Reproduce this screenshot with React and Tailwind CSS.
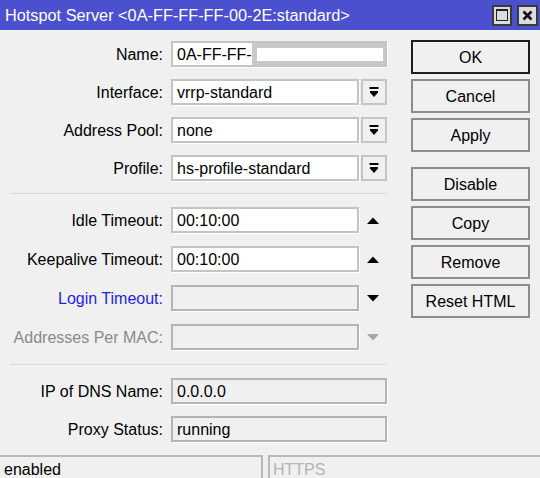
import React from "react";

function DropIcon() {
  return (
    <svg width="10" height="11" viewBox="0 0 10 11">
      <rect x="0.5" y="0" width="9" height="2" fill="#000" />
      <polygon points="1,4 9,4 9,5.5 5,10 1,5.5" fill="#000" />
    </svg>
  );
}

function Tri({ up, color = "#000" }) {
  return (
    <svg width="12" height="7" viewBox="0 0 12 7">
      {up ? (
        <polygon points="0,7 12,7 6,0.5" fill={color} />
      ) : (
        <polygon points="0,0 12,0 6,6.5" fill={color} />
      )}
    </svg>
  );
}

function Row({ label, labelClass = "text-black", children }) {
  return (
    <div className="flex items-center h-[26px]">
      <div className={`w-[163px] pt-[2px] text-right whitespace-nowrap ${labelClass}`}>{label}</div>
      <div className="ml-[8px] flex items-center h-full">{children}</div>
    </div>
  );
}

function Field({ value, wide, disabled, children }) {
  return (
    <div
      className={`h-[26px] ${wide ? "w-[216px]" : "w-[188px]"} flex items-center pl-[4px] border-2 ${
        disabled ? "bg-[#f0f0f0] border-[#b4b4b4]" : "bg-white border-[#c4c4c4]"
      } shadow-[1px_1px_0_#ffffff] overflow-hidden whitespace-nowrap`}
    >
      <span className="pt-[2px]">{value}</span>
      {children}
    </div>
  );
}

function DropBtn() {
  return (
    <div className="ml-[2px] w-[26px] h-[26px] border-2 border-[#c4c4c4] bg-[#f0f0f0] flex items-center justify-center">
      <DropIcon />
    </div>
  );
}

function Arrow({ up, color }) {
  return (
    <div className="w-[28px] flex items-center justify-center">
      <Tri up={up} color={color} />
    </div>
  );
}

function Btn({ children, primary, className = "" }) {
  return (
    <button
      className={`w-[119px] h-[34px] pt-[2px] bg-[#f0f0f0] border-2 ${
        primary ? "border-[#1e1e1e]" : "border-[#8c8c8c]"
      } text-black ${className}`}
    >
      {children}
    </button>
  );
}

export default function App() {
  return (
    <div className="w-[540px] h-[478px] bg-[#f0f0f0] flex flex-col overflow-hidden font-['Liberation_Sans',Arial,sans-serif] text-[16px] leading-none text-black">
      {/* Title bar */}
      <div className="h-[30px] bg-[#4b50cf] flex items-center pl-[5px] pr-[2px] text-white text-[16.3px] shrink-0">
        <div className="flex-1 pt-[1px] whitespace-nowrap">Hotspot Server &lt;0A-FF-FF-FF-00-2E:standard&gt;</div>
        <div className="flex gap-[5px]">
          <div className="w-[20px] h-[21px] bg-[#dcdcdc] border-2 border-[#3a3a3a] flex items-center justify-center">
            <div className="w-[12px] h-[12px] border border-[#222] border-t-2"></div>
          </div>
          <div className="w-[21px] h-[21px] bg-[#dcdcdc] border-2 border-[#3a3a3a] flex items-center justify-center">
            <svg width="11" height="11" viewBox="0 0 11 11">
              <path d="M1.5 1.5 L9.5 9.5 M9.5 1.5 L1.5 9.5" stroke="#111" strokeWidth="2.6" />
            </svg>
          </div>
        </div>
      </div>

      <div className="flex flex-1">
        {/* Left: fields */}
        <div className="w-[400px] flex flex-col pt-[11px]">
          <div className="flex flex-col gap-[12px]">
            <Row label="Name:">
              <Field value="0A-FF-FF-" wide>
                <div className="w-[137px] h-[23px] bg-[#c8c8c8] flex items-center pl-[5px]">
                  <div className="w-[126px] h-[13px] bg-white"></div>
                </div>
              </Field>
            </Row>
            <Row label="Interface:">
              <Field value="vrrp-standard" />
              <DropBtn />
            </Row>
            <Row label="Address Pool:">
              <Field value="none" />
              <DropBtn />
            </Row>
            <Row label="Profile:">
              <Field value="hs-profile-standard" />
              <DropBtn />
            </Row>
          </div>

          <div className="mt-[12px] ml-[10px] w-[377px] h-[1px] bg-[#d9d9d9]"></div>

          <div className="mt-[13px] flex flex-col gap-[13px]">
            <Row label="Idle Timeout:">
              <Field value="00:10:00" />
              <Arrow up />
            </Row>
            <Row label="Keepalive Timeout:">
              <Field value="00:10:00" />
              <Arrow up />
            </Row>
            <Row label="Login Timeout:" labelClass="text-[#1f1fe6]">
              <Field value="" disabled />
              <Arrow />
            </Row>
            <Row label="Addresses Per MAC:" labelClass="text-[#8a8a8a]">
              <Field value="" disabled />
              <Arrow color="#a3a8a3" />
            </Row>
          </div>

          <div className="mt-[14px] ml-[10px] w-[377px] h-[1px] bg-[#d9d9d9]"></div>

          <div className="mt-[13px] flex flex-col gap-[12px]">
            <Row label="IP of DNS Name:">
              <Field value="0.0.0.0" wide disabled />
            </Row>
            <Row label="Proxy Status:">
              <Field value="running" wide disabled />
            </Row>
          </div>
        </div>

        {/* Right: buttons */}
        <div className="flex flex-col pt-[10px] pl-[11px] gap-[5px]">
          <Btn primary>OK</Btn>
          <Btn>Cancel</Btn>
          <Btn>Apply</Btn>
          <Btn className="mt-[10px]">Disable</Btn>
          <Btn>Copy</Btn>
          <Btn>Remove</Btn>
          <Btn>Reset HTML</Btn>
        </div>
      </div>

      {/* Status bar */}
      <div className="h-[23px] flex shrink-0">
        <div className="w-[263px] border-t-2 border-r-2 border-[#b9b9b9] pl-[4px] pt-[5px] whitespace-nowrap">enabled</div>
        <div className="ml-[5px] flex-1 border-t-2 border-l-2 border-[#b9b9b9] pl-[3px] pt-[5px] text-[#b4b4b4] whitespace-nowrap">HTTPS</div>
      </div>
    </div>
  );
}
